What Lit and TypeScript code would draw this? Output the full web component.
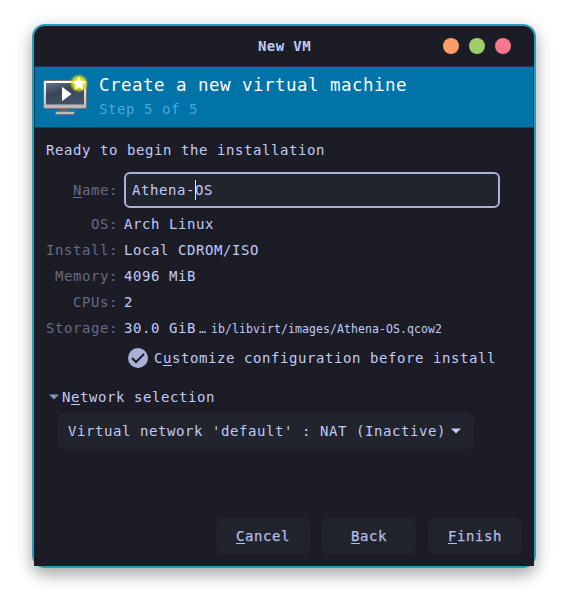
import { LitElement, html, css } from "lit";
import { customElement } from "lit/decorators.js";

const details: [string, string][] = [
  ["OS:", "Arch Linux"],
  ["Install:", "Local CDROM/ISO"],
  ["Memory:", "4096 MiB"],
  ["CPUs:", "2"],
];

@customElement("app-root")
export class AppRoot extends LitElement {
  static styles = css`
    :host {
      display: block;
      box-sizing: border-box;
      width: 568px;
      height: 608px;
      padding: 24px 32px 40px;
      background: #fff;
      overflow: hidden;
      font: 14px/20px "DejaVu Sans Mono", monospace;
      letter-spacing: 0.57px;
      color: #c0caf5;
      white-space: pre;
    }
    * {
      box-sizing: border-box;
    }
    .frame {
      height: 544px;
      padding: 2px;
      border-radius: 13px;
      background: #249fbc;
      box-shadow: 0 7px 16px rgba(0, 0, 0, 0.3), 0 2px 22px rgba(0, 0, 0, 0.08);
    }
    .window {
      height: 540px;
      border-radius: 11px 11px 0 0;
      background: #1c1c27;
      overflow: hidden;
      display: flex;
      flex-direction: column;
    }
    .bar {
      height: 40px;
      flex: none;
      display: grid;
      grid-template-columns: 1fr auto 1fr;
      align-items: center;
    }
    .title {
      grid-column: 2;
      font-weight: bold;
      padding-left: 1px;
      letter-spacing: 0.4px;
    }
    .controls {
      display: flex;
      justify-content: flex-end;
      gap: 10px;
      padding-right: 23px;
    }
    .dot {
      width: 16px;
      height: 16px;
      border-radius: 50%;
    }
    .min { background: #ff9e64; }
    .max { background: #9ece6a; }
    .close { background: #f7768e; }
    .banner {
      height: 62px;
      flex: none;
      border: 1px solid #2c3550;
      background: #0073a8;
      display: flex;
      padding: 6px 0 0 7px;
      gap: 9px;
    }
    .banner svg { flex: none; margin-top: 1px; }
    .heading {
      font-size: 17.5px;
      line-height: 24px;
      letter-spacing: 0.46px;
      color: #fff;
    }
    .step { line-height: 24px; color: #49a8dc; }
    .body {
      flex: 1;
      padding: 12px 12px;
      display: flex;
      flex-direction: column;
    }
    .form {
      display: grid;
      grid-template-columns: 72px 376px;
      column-gap: 6px;
      grid-template-rows: 36px 3px;
      grid-auto-rows: 26px;
      align-items: center;
      margin-top: 12px;
    }
    .label { text-align: right; color: #666a85; }
    .entry {
      height: 36px;
      border: 2px solid #a9b1d6;
      border-radius: 6px;
      background: #21232d;
      display: flex;
      align-items: center;
      padding-left: 6px;
    }
    .caret {
      width: 1px;
      height: 20px;
      margin-right: -1px;
      background: #e0e6ff;
    }
    .gap { grid-column: 1 / 3; height: 3px; }
    .path { font-size: 11.5px; letter-spacing: 0.077px; }
    .dots { margin: 0 5px 0 3px; }
    u {
      text-decoration: underline;
      text-decoration-thickness: 1px;
      text-underline-offset: 2px;
      text-decoration-skip-ink: none;
    }
    .check {
      display: flex;
      align-items: center;
      gap: 6px;
      margin: 7px 0 0 82px;
    }
    .expander {
      display: flex;
      align-items: center;
      gap: 3px;
      margin: 19px 0 0 3px;
    }
    .combo {
      width: 416px;
      height: 36px;
      margin: 6px 0 0 12px;
      padding-left: 10px;
      border-radius: 6px;
      background: #21232d;
      display: flex;
      align-items: center;
      gap: 5px;
    }
    .actions {
      margin-top: auto;
      display: flex;
      justify-content: flex-end;
      gap: 12px;
    }
    .button {
      width: 94px;
      height: 36px;
      border: 0;
      padding: 0;
      border-radius: 6px;
      background: #21232d;
      color: #b4bde6;
      font: inherit;
      -webkit-text-stroke: 0.25px #b4bde6;
      letter-spacing: inherit;
    }
  `;

  private monitor() {
    return html`<svg width="48" height="42" viewBox="0 0 48 42">
      <defs>
        <linearGradient id="metal" x1="0" y1="0" x2="0" y2="1">
          <stop offset="0" stop-color="#fff" />
          <stop offset="1" stop-color="#b5b5b5" />
        </linearGradient>
        <linearGradient id="screen" x1="0" y1="0" x2="0.6" y2="1">
          <stop offset="0" stop-color="#65728a" />
          <stop offset="0.45" stop-color="#3a4658" />
          <stop offset="1" stop-color="#455269" />
        </linearGradient>
        <radialGradient id="glow">
          <stop offset="0.4" stop-color="#eef000" />
          <stop offset="0.7" stop-color="#cddc14" stop-opacity="0.85" />
          <stop offset="1" stop-color="#a4c020" stop-opacity="0" />
        </radialGradient>
      </defs>
      <path d="M18 34h10v4H18z" fill="#666" />
      <rect x="13.500" y="37.500" width="19" height="3" rx="1" fill="#bbb" stroke="#747474" />
      <rect x="1.500" y="6.500" width="43" height="28" rx="1.500" fill="url(#metal)" stroke="#777" />
      <rect x="4" y="9" width="38" height="21.500" fill="url(#screen)" />
      <path d="M20 12.700v14.500l9.500-7.200z" fill="#fff" />
      <circle cx="37" cy="9.300" r="9.600" fill="url(#glow)" />
      <path d="M37 2.900l2 4.100 4.500.6-3.200 3.200.8 4.500-4.100-2.100-4.100 2.100.8-4.500-3.200-3.200 4.500-.6z" fill="#fff" stroke="#fff" stroke-width=".4" />
    </svg>`;
  }

  private arrow(color: string) {
    return html`<svg width="10" height="6" viewBox="0 0 10 6"><path d="M0 .5h10L5 5.500z" fill=${color} /></svg>`;
  }

  render() {
    return html`<div class="frame"><div class="window">
      ${this.header()}${this.content()}
    </div></div>`;
  }

  private header() {
    return html`<div class="bar"><div class="title">New VM</div><div class="controls"><span class="dot min"></span><span class="dot max"></span><span class="dot close"></span></div></div><div class="banner">${this.monitor()}<div><div class="heading">Create a new virtual machine</div><div class="step">Step 5 of 5</div></div></div>`;
  }

  private content() {
    return html`<div class="body"><div>Ready to begin the installation</div><div class="form"><div class="label"><u>N</u>ame:</div><div class="entry"><span>Athena-</span><i class="caret"></i><span>OS</span></div><div class="gap"></div>${details.map(
      ([label, value]) => html`<div class="label">${label}</div><div>${value}</div>`
    )}<div class="label">Storage:</div><div>30.0 GiB<span class="path"><span class="dots">…</span>ib/libvirt/images/Athena-OS.qcow2</span></div></div><div class="check"><svg width="20" height="20" viewBox="0 0 20 20"><circle cx="10" cy="10" r="10" fill="#a9b1d6" /><path d="M4 10l4 4 8-8" fill="none" stroke="#1c1c27" stroke-width="2" /></svg><span>C<u>u</u>stomize configuration before install</span></div><div class="expander">${this.arrow("#8a91b4")}<span>N<u>e</u>twork selection</span></div><div class="combo"><span>Virtual network 'default' : NAT (Inactive)</span>${this.arrow("#c0caf5")}</div><div class="actions"><button class="button"><u>C</u>ancel</button><button class="button"><u>B</u>ack</button><button class="button"><u>F</u>inish</button></div></div>`;
  }
}
